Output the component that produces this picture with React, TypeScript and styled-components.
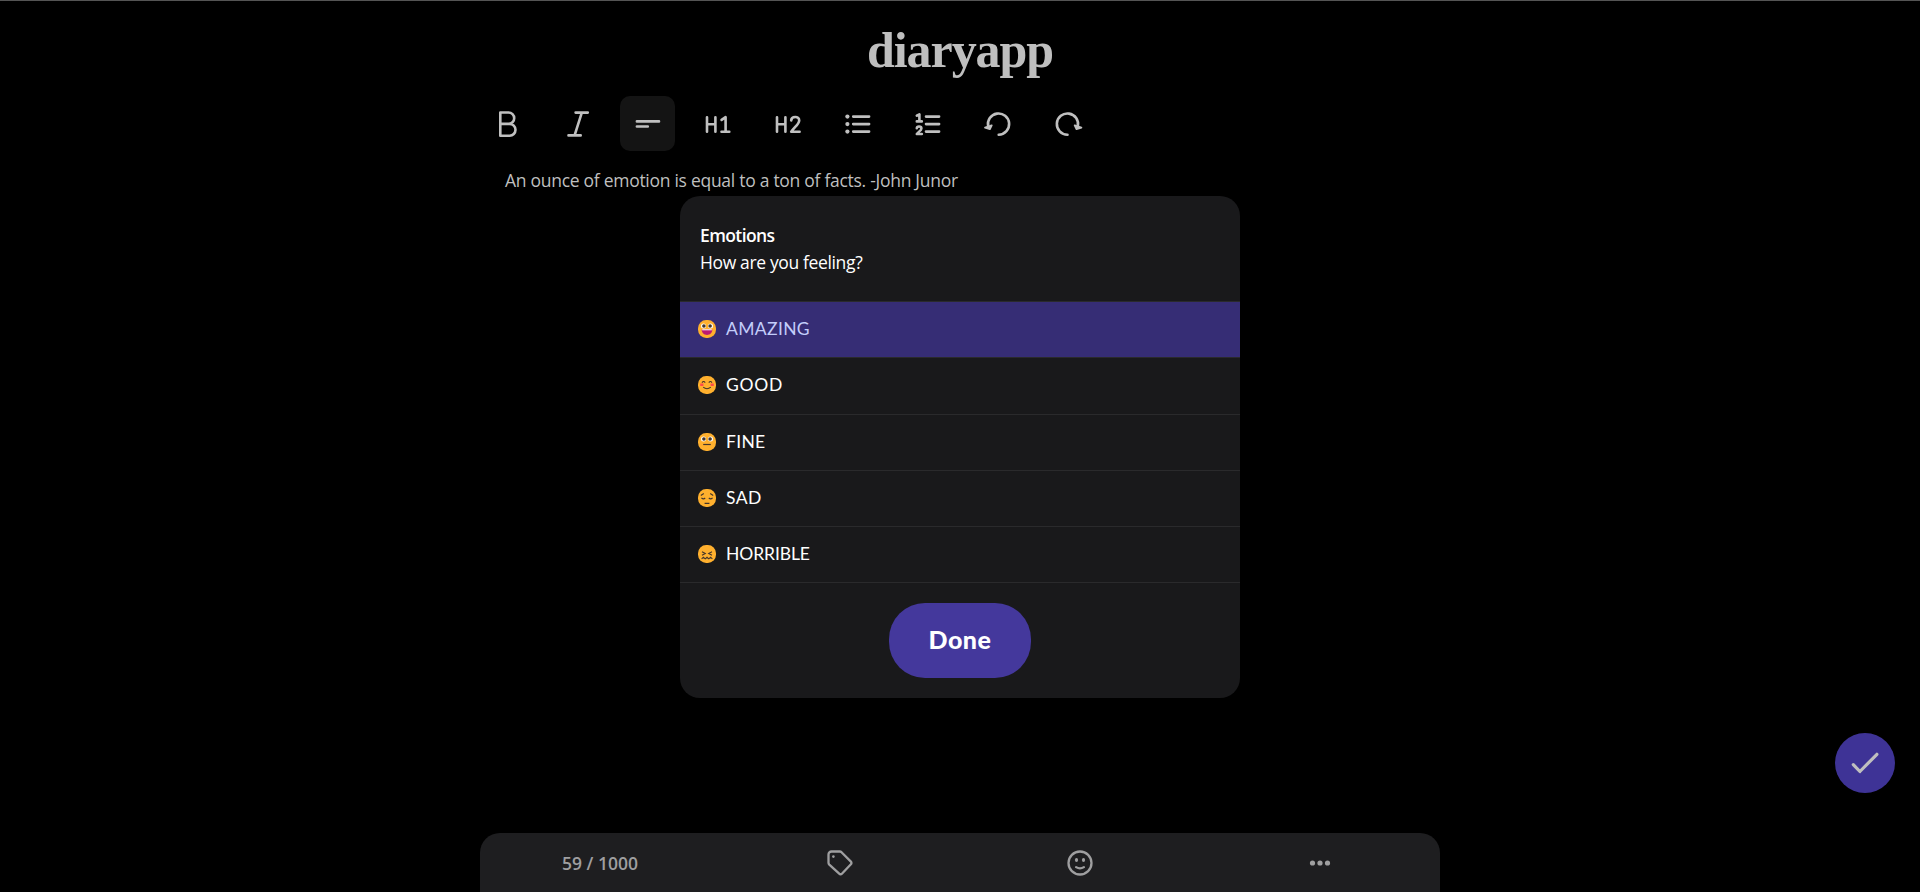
import React, { ReactNode } from "react";
import styled, { createGlobalStyle } from "styled-components";

const GlobalStyle = createGlobalStyle`
  * { box-sizing: border-box; }
  body {
    margin: 0;
    background: #000;
    font-family: "Open Sans", "Noto Sans", sans-serif;
    overflow: hidden;
  }
  button { font: inherit; }
`;

const Page = styled.div`
  position: relative;
  display: flex;
  flex-direction: column;
  align-items: center;
  height: 892px;
  background: #000;
  border-top: 1px solid #545454;
`;

const Brand = styled.h1`
  margin: 0;
  height: 95px;
  padding-top: 19px;
  font: 700 50px/60px "Liberation Serif", serif;
  letter-spacing: -1.05px;
  color: #bfbfbf;
`;

const Editor = styled.main`
  display: flex;
  flex-direction: column;
  flex: 1;
  width: 960px;
`;

const Toolbar = styled.div`
  display: flex;
  gap: 15px;
  height: 55px;
`;

const Tool = styled.button<{ $active?: boolean }>`
  width: 55px;
  height: 55px;
  padding: 0;
  border: 0;
  border-radius: 10px;
  background: ${(p) => (p.$active ? "#141414" : "transparent")};
  color: #c0c0c0;
`;

const ToolIcon = styled.svg`
  display: block;
  fill: none;
  stroke: currentColor;
  stroke-width: 2.6;
  stroke-linecap: round;
  stroke-linejoin: round;
`;

const Entry = styled.p`
  margin: 0;
  padding: 16px 25px 0;
  font-size: 17.5px;
  line-height: 26px;
  letter-spacing: -0.28px;
  color: #bfbfbf;
`;

const Footer = styled.footer`
  display: grid;
  grid-template-columns: repeat(4, 1fr);
  align-items: center;
  justify-items: center;
  height: 59px;
  margin-top: auto;
  border-radius: 20px 20px 0 0;
  background: #1e1e20;
  color: #9f9fa0;
`;

const Count = styled.span`
  font-size: 17.5px;
  font-weight: 600;
  line-height: 24px;
  letter-spacing: 0;
`;

const FooterIcon = styled.svg`
  fill: none;
  stroke: currentColor;
  stroke-width: 2.3;
  stroke-linecap: round;
  stroke-linejoin: round;
`;

const SaveButton = styled.button`
  position: absolute;
  right: 25px;
  bottom: 99px;
  width: 60px;
  height: 60px;
  padding: 0;
  border: 0;
  border-radius: 50%;
  background: #3e3396;
  color: #bfbfbf;
`;

const Dialog = styled.section`
  position: absolute;
  top: 195px;
  left: 680px;
  width: 560px;
  height: 502px;
  border-radius: 20px;
  background: #19191b;
  color: #fff;
`;

const DialogHeader = styled.header`
  height: 106px;
  padding: 26px 20px 0;
  border-bottom: 1px solid #2a2a2c;
  font-size: 17.5px;
  line-height: 27px;
  letter-spacing: -0.36px;
`;

const DialogTitle = styled.div`
  font-weight: 600;
  letter-spacing: -0.6px;
`;

const EmotionRow = styled.div<{ $selected?: boolean }>`
  display: flex;
  align-items: center;
  gap: 10px;
  height: 56.25px;
  padding: 0 18px 1px;
  border-bottom: 1px solid #2a2a2c;
  background: ${(p) => (p.$selected ? "#362d75" : "transparent")};
  color: ${(p) => (p.$selected ? "#c3cdfb" : "#fff")};
`;

const EmotionName = styled.span<{ $spacing: number }>`
  font: 400 17.5px/24px Lato, sans-serif;
  letter-spacing: ${(p) => p.$spacing}px;
`;

const Face = styled.svg`
  display: block;
  width: 18px;
  height: 18px;
`;

const DialogActions = styled.div`
  display: flex;
  justify-content: center;
  padding-top: 20px;
`;

const DoneButton = styled.button`
  width: 142px;
  height: 75px;
  padding: 0 0 3px;
  border: 0;
  border-radius: 36px;
  background: #44389c;
  color: #fff;
  font: 900 25px/30px Lato, sans-serif;
  letter-spacing: 0.5px;
`;

const tools: { name: string; active?: boolean; icon: ReactNode }[] = [
  {
    name: "Bold",
    icon: <path d="M20.3 16.5h8.2a5.7 5.7 0 0 1 0 11.4h-8.2zM20.3 27.9h9.3a5.9 5.9 0 0 1 0 11.8h-9.3z" />,
  },
  { name: "Italic", icon: <path d="M25.6 16.6h12.2M18.5 39.4h12.2M31.8 16.6l-7.2 22.8" /> },
  { name: "Paragraph", active: true, icon: <path d="M16.9 25.4h22.1M16.9 30.5h10.9" /> },
  {
    name: "Heading 1",
    icon: (
      <g>
        <path d="M17 21.2v14.6M25.4 21.2v14.6M17 28.2h8.4" />
        <path d="M31.6 23.9l4-2.7v14.6M31.5 35.8h7.8" />
      </g>
    ),
  },
  {
    name: "Heading 2",
    icon: (
      <g>
        <path d="M17 21.2v14.6M25.4 21.2v14.6M17 28.2h8.4" />
        <path d="M31.2 24.4c.2-4.4 8-4.6 8 0 0 3.6-4.6 6.6-8 11.4h8.4" />
      </g>
    ),
  },
  {
    name: "Bulleted list",
    icon: (
      <>
        <path d="M23.2 20.6h15.9M23.2 28.1h15.9M23.2 35.6h15.9" />
        <g fill="currentColor" stroke="none">
          <circle cx="17.4" cy="20.6" r="2.1" />
          <circle cx="17.4" cy="28.1" r="2.1" />
          <circle cx="17.4" cy="35.6" r="2.1" />
        </g>
      </>
    ),
  },
  {
    name: "Numbered list",
    icon: (
      <>
        <path d="M26 20.6h13.1M26 28.1h13.1M26 35.6h13.1" />
        <path d="M16.8 19.7l2.6-1.4v7M16.8 25.4h5" />
        <path d="M16.8 32.3c.1-2.4 4.6-2.3 4.6.1 0 2-2.8 3.2-4.6 5.6h5" />
      </>
    ),
  },
  {
    name: "Undo",
    icon: (
      <>
        <path d="M18.2 30.4A10.6 10.6 0 1 1 28.7 38.7" />
        <path d="M15 31.7l4.9 1.5 1.8-3.9z" fill="currentColor" strokeWidth="1.8" />
      </>
    ),
  },
  {
    name: "Redo",
    icon: (
      <>
        <path d="M37.8 30.4A10.6 10.6 0 1 0 27.5 38.7" />
        <path d="M41.4 31.7l-4.9 1.5-1.8-3.9z" fill="currentColor" strokeWidth="1.8" />
      </>
    ),
  },
];

const ink = "#43352c";

const wideEyes = (
  <>
    <circle cx="5.5" cy="6" r="2.5" fill="#fff" />
    <circle cx="12.5" cy="6" r="2.5" fill="#fff" />
    <circle cx="5.9" cy="6" r="1.8" fill={ink} />
    <circle cx="12.1" cy="6" r="1.8" fill={ink} />
  </>
);

const emotions: { name: string; spacing: number; selected?: boolean; face: ReactNode }[] = [
  {
    name: "AMAZING",
    spacing: 0.35,
    selected: true,
    face: (
      <>
        {wideEyes}
        <path d="M3.7 9.6h10.6c.2 7.2-10.8 7.2-10.6 0z" fill="#bd1b72" />
        <path d="M4.2 9.3h9.6v1H4.2z" fill="#fff" />
      </>
    ),
  },
  {
    name: "GOOD",
    spacing: 0.7,
    face: (
      <>
        <path d="M2.2 7.6h3.2v2.4H2.2zM12.6 7.6h3.2v2.4h-3.2z" fill="#ff4a4a" />
        <path
          d="M4 6.6q1.6-2.3 3.2 0M10.8 6.6q1.6-2.3 3.2 0M5.2 11.2q3.8 3.2 7.6 0"
          fill="none"
          stroke={ink}
          strokeWidth="1.1"
        />
      </>
    ),
  },
  {
    name: "FINE",
    spacing: 0.3,
    face: (
      <>
        {wideEyes}
        <path d="M5.2 11.5h7.6" stroke={ink} strokeWidth="1.2" />
      </>
    ),
  },
  {
    name: "SAD",
    spacing: 0.45,
    face: (
      <path
        d="M2.8 6.5l3-2M15.2 6.5l-3-2M3.4 8.8q2 1.9 3.8.2M10.8 9q1.8 1.7 3.8-.2M6.6 14.4h4.8"
        fill="none"
        stroke={ink}
        strokeWidth="1.1"
      />
    ),
  },
  {
    name: "HORRIBLE",
    spacing: -0.1,
    face: (
      <path
        d="M4 6.8l3.3 1.8L4 10.3M14 6.8l-3.3 1.8 3.3 1.7M3.6 13.8l1.8-1.5 1.8 1.5L9 12.3l1.8 1.5 1.8-1.5 1.8 1.5"
        fill="none"
        stroke={ink}
        strokeWidth="1.1"
      />
    ),
  },
];

export default function App() {
  return (
    <>
      <GlobalStyle />
      <Page>
        <Brand>diaryapp</Brand>
        <Editor>
          <Toolbar>
            {tools.map((tool) => (
              <Tool key={tool.name} $active={tool.active} aria-label={tool.name}>
                <ToolIcon width="55" height="55" viewBox="0 0 55 55">
                  {tool.icon}
                </ToolIcon>
              </Tool>
            ))}
          </Toolbar>
          <Entry>An ounce of emotion is equal to a ton of facts. -John Junor</Entry>
          <Footer>
            <Count>59 / 1000</Count>
            <FooterIcon width="28" height="28" viewBox="0 0 28 28">
              <path d="M2.5 5.5a3 3 0 0 1 3-3h8.2a2.6 2.6 0 0 1 1.8.7l9.4 9.4a1.8 1.8 0 0 1 0 2.6l-9 9.5a1.9 1.9 0 0 1-2.7 0L3.3 15.6a2.8 2.8 0 0 1-.8-1.9z" />
              <circle cx="7.4" cy="7.6" r="1.3" fill="currentColor" stroke="none" />
            </FooterIcon>
            <FooterIcon width="28" height="28" viewBox="0 0 28 28">
              <circle cx="14" cy="14" r="11.5" />
              <path d="M10.1 18.1q3.9 2.5 7.8 0" />
              <ellipse cx="10.5" cy="11" rx="1.6" ry="2.1" fill="currentColor" stroke="none" />
              <ellipse cx="17.5" cy="11" rx="1.6" ry="2.1" fill="currentColor" stroke="none" />
            </FooterIcon>
            <FooterIcon width="28" height="28" viewBox="0 0 28 28">
              <g fill="currentColor" stroke="none">
                <circle cx="6.5" cy="14" r="2.6" />
                <circle cx="14" cy="14" r="2.6" />
                <circle cx="21.5" cy="14" r="2.6" />
              </g>
            </FooterIcon>
          </Footer>
        </Editor>
        <SaveButton aria-label="Save">
          <ToolIcon width="60" height="60" viewBox="0 0 60 60">
            <path d="M18.3 31.6l6.6 6.9L41.9 21.3" strokeWidth="3.2" />
          </ToolIcon>
        </SaveButton>
        <Dialog>
          <DialogHeader>
            <DialogTitle>Emotions</DialogTitle>
            How are you feeling?
          </DialogHeader>
          {emotions.map((e) => (
            <EmotionRow key={e.name} $selected={e.selected}>
              <Face viewBox="0 0 18 18">
                <rect width="18" height="18" rx="8.2" fill="#ffb02e" />
                {e.face}
              </Face>
              <EmotionName $spacing={e.spacing}>{e.name}</EmotionName>
            </EmotionRow>
          ))}
          <DialogActions>
            <DoneButton>Done</DoneButton>
          </DialogActions>
        </Dialog>
      </Page>
    </>
  );
}
